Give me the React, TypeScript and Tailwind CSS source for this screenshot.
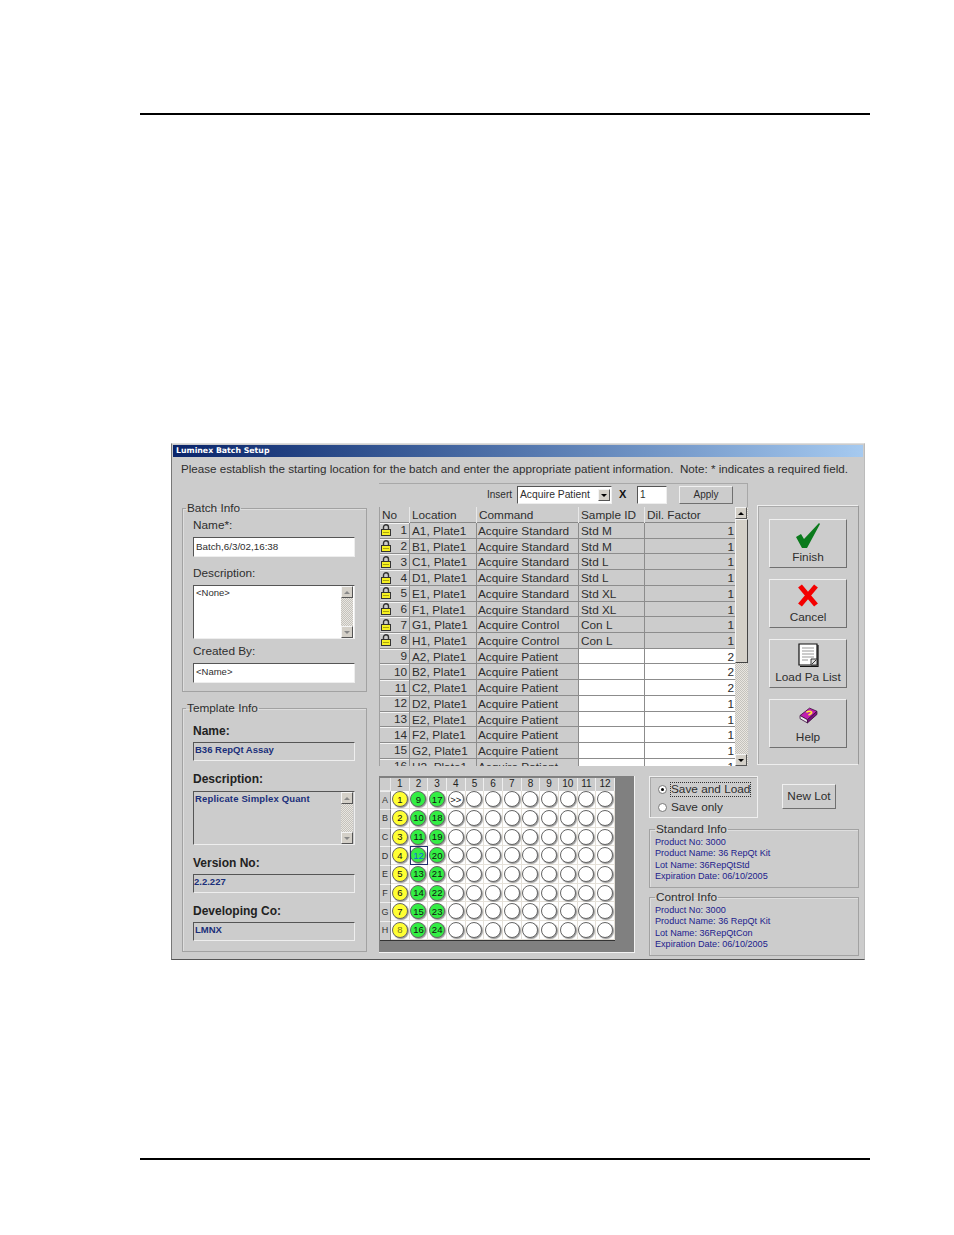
import React from "react";

const ink = "text-[#2e2e2e]";
const raised = "border border-t-[#f0f0f0] border-l-[#f0f0f0] border-r-[#707070] border-b-[#707070] bg-[#cccccc]";
const sunken = "border border-t-[#555] border-l-[#555] border-r-[#eee] border-b-[#eee]";
const dots = "bg-[repeating-conic-gradient(#e9e6e0_0_25%,#c4c2bc_0_50%)] bg-[length:2px_2px]";

const rows = [
  [1, "A1, Plate1", "Acquire Standard", "Std M", 1],
  [2, "B1, Plate1", "Acquire Standard", "Std M", 1],
  [3, "C1, Plate1", "Acquire Standard", "Std L", 1],
  [4, "D1, Plate1", "Acquire Standard", "Std L", 1],
  [5, "E1, Plate1", "Acquire Standard", "Std XL", 1],
  [6, "F1, Plate1", "Acquire Standard", "Std XL", 1],
  [7, "G1, Plate1", "Acquire Control", "Con L", 1],
  [8, "H1, Plate1", "Acquire Control", "Con L", 1],
  [9, "A2, Plate1", "Acquire Patient", "", 2],
  [10, "B2, Plate1", "Acquire Patient", "", 2],
  [11, "C2, Plate1", "Acquire Patient", "", 2],
  [12, "D2, Plate1", "Acquire Patient", "", 1],
  [13, "E2, Plate1", "Acquire Patient", "", 1],
  [14, "F2, Plate1", "Acquire Patient", "", 1],
  [15, "G2, Plate1", "Acquire Patient", "", 1],
  [16, "H2, Plate1", "Acquire Patient", "", 1],
] as const;

function Lock() {
  return (
    <svg width="10" height="12" viewBox="0 0 10 12" className="shrink-0">
      <path d="M2.5 6V3.2a2.5 2.5 0 0 1 5 0V6" fill="none" stroke="#333" strokeWidth="1.4" />
      <rect x="0.5" y="5.5" width="9" height="6" fill="#f6f020" stroke="#333" strokeWidth="1" />
      <path d="M2 8.5h6" stroke="#a8a210" strokeWidth="1" />
    </svg>
  );
}

function Arrow({ up, dim }: { up?: boolean; dim?: boolean }) {
  return (
    <div className={`w-[12px] h-[12px] shrink-0 flex items-center justify-center bg-[#d4d0c8] border border-t-[#f4f4f4] border-l-[#f4f4f4] border-r-[#555] border-b-[#555]`}>
      <div className={`w-0 h-0 border-l-[3px] border-r-[3px] border-l-transparent border-r-transparent ${up ? "border-b-[3px]" : "border-t-[3px]"} ${dim ? (up ? "border-b-[#888]" : "border-t-[#888]") : up ? "border-b-black" : "border-t-black"}`} />
    </div>
  );
}

function MiniScroll() {
  return (
    <div className={`w-[12px] h-full flex flex-col justify-between ${dots}`}>
      <Arrow up dim />
      <Arrow dim />
    </div>
  );
}

function Group({ title, className, legend, children }: { title: string; className: string; legend: string; children: React.ReactNode }) {
  return (
    <fieldset className={`border border-[#a2a2a2] shadow-[inset_1px_1px_0_#dedede] ${className}`}>
      <legend className={`${legend} px-[1px] text-[11.8px] leading-[14px] ${ink}`}>{title}</legend>
      {children}
    </fieldset>
  );
}

function BoldLabel({ children, className }: { children: React.ReactNode; className: string }) {
  return <div className={`ml-[10px] text-[12px] leading-[14px] font-bold text-[#222] ${className}`}>{children}</div>;
}

function Label({ children, className }: { children: React.ReactNode; className: string }) {
  return <div className={`ml-[10px] text-[11.8px] leading-[14px] ${ink} ${className}`}>{children}</div>;
}

function Well({ n, kind, sel }: { n?: string; kind: "y" | "g" | "w"; sel?: boolean }) {
  const bg = kind === "y" ? "bg-[#ffff33]" : kind === "g" ? "bg-[#33ee44]" : "bg-white";
  return (
    <div className={`relative flex items-center justify-center bg-white border-r border-b border-[#e4e0d8] ${sel ? "outline-1 -outline-offset-1 outline-[#1f2f6f]" : ""}`}>
      <div className={`w-[16px] h-[16px] rounded-full ${bg} border border-[#666] shadow-[1px_1px_1px_#999] flex items-center justify-center text-[9.5px] leading-none ${sel ? "text-[#1466e0]" : n === "8" ? "text-[#77771a]" : "text-[#111]"}`}>
        {n}
      </div>
    </div>
  );
}

function Plate() {
  const letters = "ABCDEFGH".split("");
  return (
    <div className="w-[256px] h-[177px] bg-[#808080] border-r border-b border-[#f2f2f2] pl-[1px] pt-[2px]">
      <div className="grid grid-cols-[11px_repeat(12,18.67px)] grid-rows-[12.5px_repeat(8,18.67px)] w-[235px] border-r border-b border-[#333]">
        <div className="bg-[#cccccc] border-r border-b border-[#e8e8e8]" />
        {Array.from({ length: 12 }, (_, i) => (
          <div key={i} className="bg-[#cccccc] border-r border-[#eee] text-[10px] leading-[12px] text-center text-[#222]">{i + 1}</div>
        ))}
        {letters.map((l, r) => (
          <React.Fragment key={l}>
            <div className="bg-[#cccccc] border-t border-[#eee] border-r border-r-[#888] text-[9px] flex items-center justify-center text-[#333]">{l}</div>
            {Array.from({ length: 12 }, (_, c) => {
              if (c === 0) return <Well key={c} kind="y" n={String(r + 1)} />;
              if (c === 1) return <Well key={c} kind="g" n={String(r + 9)} sel={r === 3} />;
              if (c === 2) return <Well key={c} kind="g" n={String(r + 17)} />;
              if (c === 3 && r === 0) return <Well key={c} kind="w" n=">>" />;
              return <Well key={c} kind="w" />;
            })}
          </React.Fragment>
        ))}
      </div>
    </div>
  );
}

function ActionButton({ label, icon }: { label: string; icon: React.ReactNode }) {
  return (
    <div className={`w-[78px] h-[49px] ${raised} flex flex-col items-center justify-end pb-[3px]`}>
      <div className="h-[30px] flex items-center justify-center">{icon}</div>
      <div className={`text-[11.8px] leading-[14px] ${ink}`}>{label}</div>
    </div>
  );
}

function Info({ title, lot, className }: { title: string; lot: string; className: string }) {
  return (
    <Group title={title} legend="ml-[5px]" className={`w-[210px] h-[66px] ${className}`}>
      <div className="ml-[5px] text-[9.1px] leading-[11.4px] text-[#1c1c8c] mt-[1px]">
        <div>Product No: 3000</div>
        <div>Product Name: 36 RepQt Kit</div>
        <div>Lot Name: {lot}</div>
        <div>Expiration Date: 06/10/2005</div>
      </div>
    </Group>
  );
}

export default function App() {
  return (
    <div className="w-[954px] h-[1235px] bg-white pt-[113px] pl-[140px] overflow-hidden font-['Liberation_Sans',Arial,sans-serif]">
      <div className="w-[730px] h-[2px] bg-black" />

      {/* window */}
      <div className="ml-[31px] mt-[328px] w-[694px] h-[517px] bg-[#cccccc] border border-t-[#dddddd] border-l-[#777] border-b-[#555] border-r-[#bbb] px-[1px] pt-[1px]">
        <div className="h-[12px] bg-linear-to-r from-[#0a246a] to-[#a6caf0] text-white text-[7.8px] font-bold leading-[12px] pl-[3px] font-['DejaVu_Sans',sans-serif]">
          Luminex Batch Setup
        </div>
        <div className={`pl-[8px] mt-[5px] h-[14px] text-[11.64px] leading-[14px] whitespace-nowrap ${ink}`}>
          Please establish the starting location for the batch and enter the appropriate patient information.&nbsp; Note: * indicates a required field.
        </div>

        <div className="flex ml-[9px] mt-[7px]">
          {/* left column */}
          <div className="w-[185px] mr-[12px] pt-[18px] flex flex-col">
            <Group title="Batch Info" legend="ml-[3px]" className="h-[191px]">
              <Label className="mt-[3px]">Name*:</Label>
              <div className={`ml-[10px] mt-[5px] w-[162px] h-[20px] bg-white ${sunken} text-[9.8px] leading-[17px] pl-[2px] ${ink}`}>Batch,6/3/02,16:38</div>
              <Label className="mt-[9px]">Description:</Label>
              <div className={`ml-[10px] mt-[5px] w-[162px] h-[54px] bg-white ${sunken} flex justify-between pr-[1px]`}>
                <span className={`text-[9.5px] leading-[14px] pl-[2px] ${ink}`}>&lt;None&gt;</span>
                <MiniScroll />
              </div>
              <Label className="mt-[5px]">Created By:</Label>
              <div className={`ml-[10px] mt-[5px] w-[162px] h-[20px] bg-white ${sunken} text-[9.5px] leading-[15px] pl-[2px] ${ink}`}>&lt;Name&gt;</div>
            </Group>
            <Group title="Template Info" legend="ml-[3px]" className="h-[251px] mt-[9px]">
              <BoldLabel className="mt-[9px]">Name:</BoldLabel>
              <div className={`ml-[10px] mt-[4px] w-[162px] h-[19px] ${sunken} text-[9.5px] font-bold leading-[14px] pl-[1px] text-[#1a2f7a]`}>B36 RepQt Assay</div>
              <BoldLabel className="mt-[11px]">Description:</BoldLabel>
              <div className={`ml-[10px] mt-[5px] w-[162px] h-[54px] ${sunken} flex justify-between pr-[1px]`}>
                <span className="text-[9.5px] font-bold leading-[14px] pl-[1px] text-[#1a2f7a] tracking-[0.15px]">Replicate Simplex Quant</span>
                <MiniScroll />
              </div>
              <BoldLabel className="mt-[11px]">Version No:</BoldLabel>
              <div className={`ml-[10px] mt-[4px] w-[162px] h-[19px] ${sunken} text-[9.5px] font-bold leading-[14px] text-[#1a2f7a]`}>2.2.227</div>
              <BoldLabel className="mt-[11px]">Developing Co:</BoldLabel>
              <div className={`ml-[10px] mt-[4px] w-[162px] h-[19px] ${sunken} text-[9.5px] font-bold leading-[14px] pl-[1px] text-[#1a2f7a]`}>LMNX</div>
            </Group>
          </div>

          {/* right area */}
          <div className="w-[480px] flex flex-col">
            <div className="flex h-[283px]">
              <div className="w-[369px] flex flex-col">
                <div className="h-[24px] border-t border-r border-[#a8a8a8] flex items-start pt-[2px] pl-[108px]">
                  <span className={`w-[30px] text-[10px] leading-[17px] ${ink}`}>Insert</span>
                  <div className={`w-[95px] h-[18px] bg-white ${sunken} flex items-center justify-between pl-[2px] pr-[1px]`}>
                    <span className={`text-[10.3px] leading-none ${ink}`}>Acquire Patient</span>
                    <Arrow />
                  </div>
                  <span className="w-[25px] pl-[7px] text-[11px] leading-[17px] font-bold text-[#111]">X</span>
                  <div className={`w-[30px] h-[18px] bg-white ${sunken} text-[10px] leading-[15px] pl-[2px] ${ink}`}>1</div>
                  <div className={`ml-[12px] w-[54px] h-[18px] ${raised} text-[10px] leading-[16px] text-center ${ink}`}>Apply</div>
                </div>
                <div className="flex h-[259px]">
                  <div className="w-[356px] overflow-hidden border-l border-[#a0a0a0]">
                    <div className="grid grid-cols-[30px_67px_102px_66px_91px] h-[16px] bg-[#cccccc] border-b border-[#888] text-[11.8px] leading-[16px]">
                      {["No", "Location", "Command", "Sample ID", "Dil. Factor"].map((h) => (
                        <div key={h} className={`pl-[2px] border-r border-[#e8e8e8] whitespace-nowrap ${ink}`}>{h}</div>
                      ))}
                    </div>
                    {rows.map(([no, loc, cmd, sid, dil]) => {
                      const patient = no > 8;
                      const line = "border-b border-r border-[#8c8c8c]";
                      return (
                        <div key={no} className={`grid grid-cols-[30px_67px_102px_66px_91px] grid-rows-[15.72px] h-[15.72px] text-[11.8px] leading-[14px] ${ink}`}>
                          <div className={`${line} shadow-[inset_0_1px_0_#f4f4f4] flex items-center justify-between pl-[1px] pr-[2px]`}>
                            {patient ? <span /> : <Lock />}
                            <span>{no}</span>
                          </div>
                          <div className={`${line} pl-[2px] pt-[1px] whitespace-nowrap`}>{loc}</div>
                          <div className={`${line} pl-[1px] pt-[1px] whitespace-nowrap`}>{cmd}</div>
                          <div className={`${line} pl-[2px] pt-[1px] whitespace-nowrap ${patient ? "bg-white" : ""}`}>{sid}</div>
                          <div className={`${line} pr-[1px] pt-[1px] text-right ${patient ? "bg-white" : ""}`}>{dil}</div>
                        </div>
                      );
                    })}
                  </div>
                  <div className={`w-[13px] flex flex-col ${dots}`}>
                    <Arrow up />
                    <div className="h-[144px] w-[13px] bg-[#d4d0c8] border border-t-[#f4f4f4] border-l-[#f4f4f4] border-r-[#444] border-b-[#444]" />
                    <div className="flex-1" />
                    <Arrow />
                  </div>
                </div>
              </div>
              <div className="w-[102px] h-[260px] ml-[9px] mt-[22px] border border-t-[#eee] border-l-[#eee] border-r-[#999] border-b-[#eee] shadow-[inset_1px_1px_0_#aaa] pl-[11px] pt-[13px] flex flex-col gap-[11px]">
                <ActionButton
                  label="Finish"
                  icon={
                    <svg width="24" height="25" viewBox="0 0 24 25">
                      <path d="M0 14 L5 11 L8 16 L23 0 L24 1 L11 25 L6 25 Z" fill="#0a7a1c" />
                    </svg>
                  }
                />
                <ActionButton
                  label="Cancel"
                  icon={
                    <svg width="22" height="23" viewBox="0 0 22 23">
                      <path d="M3 2 L19 21 M19 2 L3 21" stroke="#f40000" strokeWidth="5" fill="none" />
                    </svg>
                  }
                />
                <ActionButton
                  label="Load Pa List"
                  icon={
                    <svg width="22" height="25" viewBox="0 0 22 25">
                      <path d="M2 1 H20 V22 H2 Z" fill="#fff" stroke="#111" strokeWidth="1.2" />
                      <path d="M21 2 V23.5 H3" fill="none" stroke="#111" strokeWidth="1.2" />
                      <path d="M5 5h12M5 8h12M5 11h12M5 14h12M5 17h6" stroke="#999" strokeWidth="1" />
                      <path d="M14 16 H20 V22 H14 Z M15 21 L19 17" fill="#ddd" stroke="#222" strokeWidth="0.9" />
                    </svg>
                  }
                />
                <ActionButton
                  label="Help"
                  icon={
                    <svg width="19" height="18" viewBox="0 0 18 17">
                      <path d="M1 9 L10 2 L17 5 L8 13 Z" fill="#c020b0" stroke="#401040" strokeWidth="0.8" />
                      <path d="M1 9 V12 L8 16 V13 Z" fill="#eee" stroke="#401040" strokeWidth="0.8" />
                      <path d="M8 13 L17 5 V8 L8 16 Z" fill="#7a1080" stroke="#401040" strokeWidth="0.8" />
                      <path d="M7 6 q3 -2 5 0 q0 1.5 -3 2.5" fill="none" stroke="#ffee33" strokeWidth="1.5" />
                    </svg>
                  }
                />
              </div>
            </div>

            <div className="flex mt-[10px]">
              <Plate />
              <div className="ml-[14px] flex flex-col">
                <div className="flex">
                  <div className="w-[109px] h-[42px] border border-[#f0f0f0] shadow-[inset_1px_1px_0_#aaa] pl-[8px] pt-[4px]">
                    <div className="flex items-center h-[17px]">
                      <div className="w-[9px] h-[9px] rounded-full bg-white border border-[#777] flex items-center justify-center mr-[4px]">
                        <div className="w-[3px] h-[3px] rounded-full bg-black" />
                      </div>
                      <span className={`text-[11.8px] leading-[13px] outline-1 outline-dotted outline-[#333] ${ink}`}>Save and Load</span>
                    </div>
                    <div className="flex items-center h-[17px] mt-[1px]">
                      <div className="w-[9px] h-[9px] rounded-full bg-white border border-[#777] mr-[4px]" />
                      <span className={`text-[11.8px] leading-[13px] ${ink}`}>Save only</span>
                    </div>
                  </div>
                  <div className={`ml-[24px] mt-[8px] w-[54px] h-[25px] ${raised} text-[11.8px] leading-[22px] text-center ${ink}`}>New Lot</div>
                </div>
                <Info title="Standard Info" lot="36RepQtStd" className="mt-[4px]" />
                <Info title="Control Info" lot="36RepQtCon" className="mt-[2px]" />
              </div>
            </div>
          </div>
        </div>
      </div>

      <div className="w-[730px] h-[2px] bg-black mt-[198px]" />
    </div>
  );
}
